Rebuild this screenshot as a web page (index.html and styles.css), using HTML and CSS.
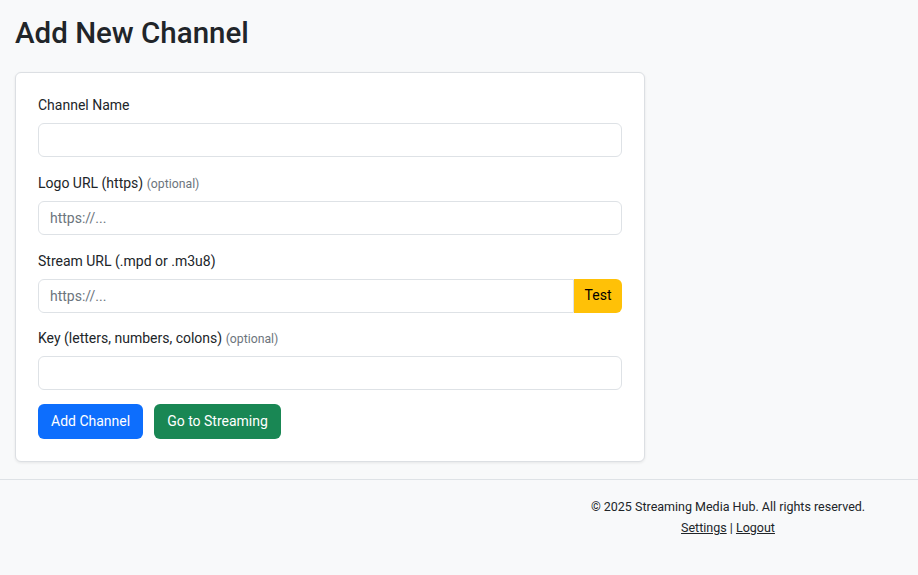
FILE: index.html
```html
<!DOCTYPE html>
<html lang="en">
<head>
  <meta charset="UTF-8">
  <meta name="viewport" content="width=device-width, initial-scale=1.0">
  <title>Add New Channel</title>
  <link rel="stylesheet" href="styles.css">
</head>
<body>
  <main class="page">
    <h2 class="page-title">Add New Channel</h2>

    <form class="card">
      <div class="field">
        <label class="form-label" for="name">Channel Name</label>
        <input class="form-control" id="name" type="text">
      </div>

      <div class="field">
        <label class="form-label" for="logo">Logo URL (https) <small class="muted">(optional)</small></label>
        <input class="form-control" id="logo" type="text" placeholder="https://...">
      </div>

      <div class="field">
        <label class="form-label" for="stream">Stream URL (.mpd or .m3u8)</label>
        <div class="input-group">
          <input class="form-control" id="stream" type="text" placeholder="https://...">
          <button class="btn btn-warning" type="button">Test</button>
        </div>
      </div>

      <div class="field field-last">
        <label class="form-label" for="key">Key (letters, numbers, colons) <small class="muted">(optional)</small></label>
        <input class="form-control" id="key" type="text">
      </div>

      <div class="actions">
        <button class="btn btn-primary" type="submit">Add Channel</button>
        <button class="btn btn-success" type="button">Go to Streaming</button>
      </div>
    </form>
  </main>

  <footer class="footer">
    <div class="footer-inner">
      <p>&copy; 2025 Streaming Media Hub. All rights reserved.</p>
      <p><a href="#">Settings</a> | <a href="#">Logout</a></p>
    </div>
  </footer>
</body>
</html>
```

FILE: styles.css
```css
* {
  box-sizing: border-box;
}

body {
  margin: 0;
  min-height: 100vh;
  background: #f8f9fa;
  color: #212529;
  font-family: Roboto, 'Noto Sans', sans-serif;
  font-size: 14px;
  line-height: 1.5;
}

.page {
  padding: 16px 15px 17px;
}

.page-title {
  margin: 0 0 21px;
  font-size: 29.5px;
  font-weight: 500;
  line-height: 1.2;
}

.card {
  width: 630px;
  padding: 22px;
  background: #fff;
  border: 1px solid #dcdfe3;
  border-radius: 6px;
  box-shadow: 0 1px 3px rgba(0, 0, 0, 0.08);
}

.field {
  margin-bottom: 15.67px;
}

.field-last {
  margin-bottom: 14px;
}

.form-label {
  display: block;
  height: 21px;
  margin-bottom: 7px;
}

.muted {
  color: #6c757d;
  font-size: 12.25px;
  line-height: 1;
}

.form-control {
  display: block;
  width: 100%;
  height: 34px;
  padding: 6px 11px;
  font: inherit;
  color: #212529;
  background: #fff;
  border: 1px solid #dee2e6;
  border-radius: 6px;
}

.form-control::placeholder {
  color: #6c757d;
}

.input-group {
  display: flex;
}

.input-group .form-control {
  flex: 1;
  border-radius: 6px 0 0 6px;
}

.input-group .btn {
  height: 34px;
  padding: 0 9.5px;
  border-radius: 0 6px 6px 0;
}

.btn {
  height: 35px;
  padding: 0 12px;
  font: inherit;
  border: 1px solid transparent;
  border-radius: 6px;
  cursor: pointer;
}

.btn-warning {
  background: #ffc107;
  color: #000;
}

.btn-primary {
  background: #0d6efd;
  color: #fff;
}

.btn-success {
  background: #198754;
  color: #fff;
}

.actions {
  display: flex;
  gap: 11px;
}

.footer {
  border-top: 1px solid #dee2e6;
  padding: 16px 0;
  font-size: 12.5px;
  line-height: 21px;
}

.footer-inner {
  width: 380px;
  margin-left: auto;
  text-align: center;
}

.footer p {
  margin: 0;
}

.footer a {
  color: #212529;
}
```
